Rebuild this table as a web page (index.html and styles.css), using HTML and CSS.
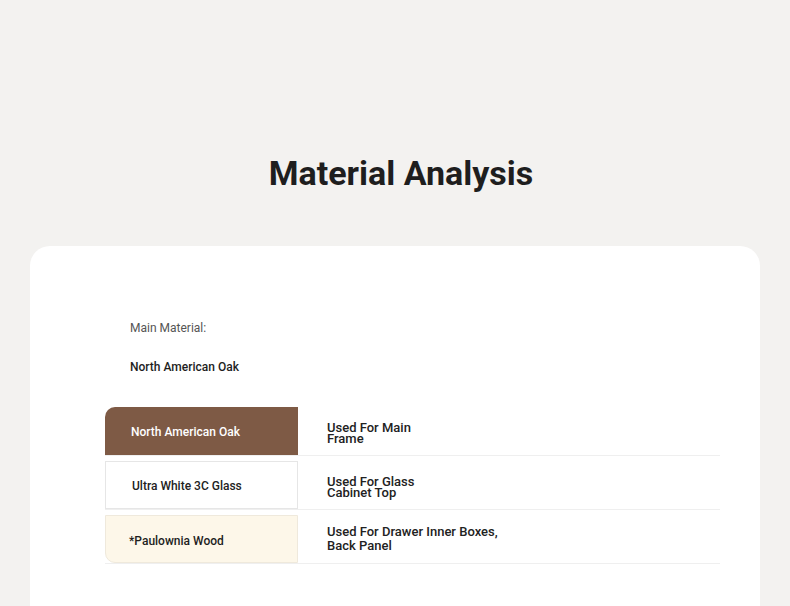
FILE: index.html
```html
<!DOCTYPE html>
<html lang="en">
<head>
    <meta charset="UTF-8">
    <meta name="viewport" content="width=device-width, initial-scale=1.0">
    <title>Material Analysis</title>
    <link rel="stylesheet" href="styles.css">
</head>
<body>
    <h1 class="title">Material Analysis</h1>
    <div class="card">
        <div class="main-material">
            <div class="label">Main Material:</div>
            <div class="value">North American Oak</div>
        </div>
        <div class="materials">
            <div class="row">
                <div class="name oak">North American Oak</div>
                <div class="use tight">Used For Main<br>Frame</div>
            </div>
            <div class="row">
                <div class="name glass">Ultra White 3C Glass</div>
                <div class="use tight">Used For Glass<br>Cabinet Top</div>
            </div>
            <div class="row">
                <div class="name paulownia">*Paulownia Wood</div>
                <div class="use">Used For Drawer Inner Boxes,<br>Back Panel</div>
            </div>
        </div>
    </div>
</body>
</html>
```

FILE: styles.css
```css
body {
    font-family: Roboto, "Liberation Sans", sans-serif;
    margin: 0;
    padding: 0;
    background-color: #f3f2f0;
    color: #222;
}
.title {
    margin: 0;
    padding: 152px 0 0 12px;
    text-align: center;
    font-size: 34px;
    line-height: 42px;
    font-weight: 700;
    color: #1e1e1e;
}
.card {
    margin: 52px 30px 0;
    background-color: #fff;
    border-radius: 20px 20px 0 0;
    padding: 73px 40px 0 75px;
    height: 360px;
    box-sizing: border-box;
}
.main-material {
    padding-left: 25px;
    font-size: 12px;
}
.main-material .label {
    color: #555;
    line-height: 18px;
}
.main-material .value {
    margin-top: 21px;
    font-weight: 500;
    line-height: 18px;
    color: #1e1e1e;
}
.materials {
    margin-top: 31px;
}
.row {
    display: flex;
    border-bottom: 1px solid #efefef;
}
.row + .row {
    padding-top: 5px;
}
.name {
    width: 193px;
    height: 48px;
    box-sizing: border-box;
    display: flex;
    align-items: center;
    padding: 2px 0 0 26px;
    font-size: 12px;
    font-weight: 500;
    flex-shrink: 0;
}
.oak {
    background-color: #7e5a45;
    color: #fff;
    border-top-left-radius: 10px;
}
.glass {
    border: 1px solid #e6e6e6;
    color: #222;
}
.paulownia {
    background-color: #fdf7e9;
    border: 1px solid #efe9dc;
    border-bottom-left-radius: 10px;
    padding: 3px 0 0 23px;
    color: #1e1e1e;
}
.use {
    flex: 1;
    display: flex;
    flex-direction: column;
    justify-content: center;
    padding-left: 29px;
    font-size: 13px;
    font-weight: 500;
    line-height: 14px;
    color: #222;
}
.use.tight {
    display: block;
    padding-top: 15px;
    line-height: 11px;
}
```
